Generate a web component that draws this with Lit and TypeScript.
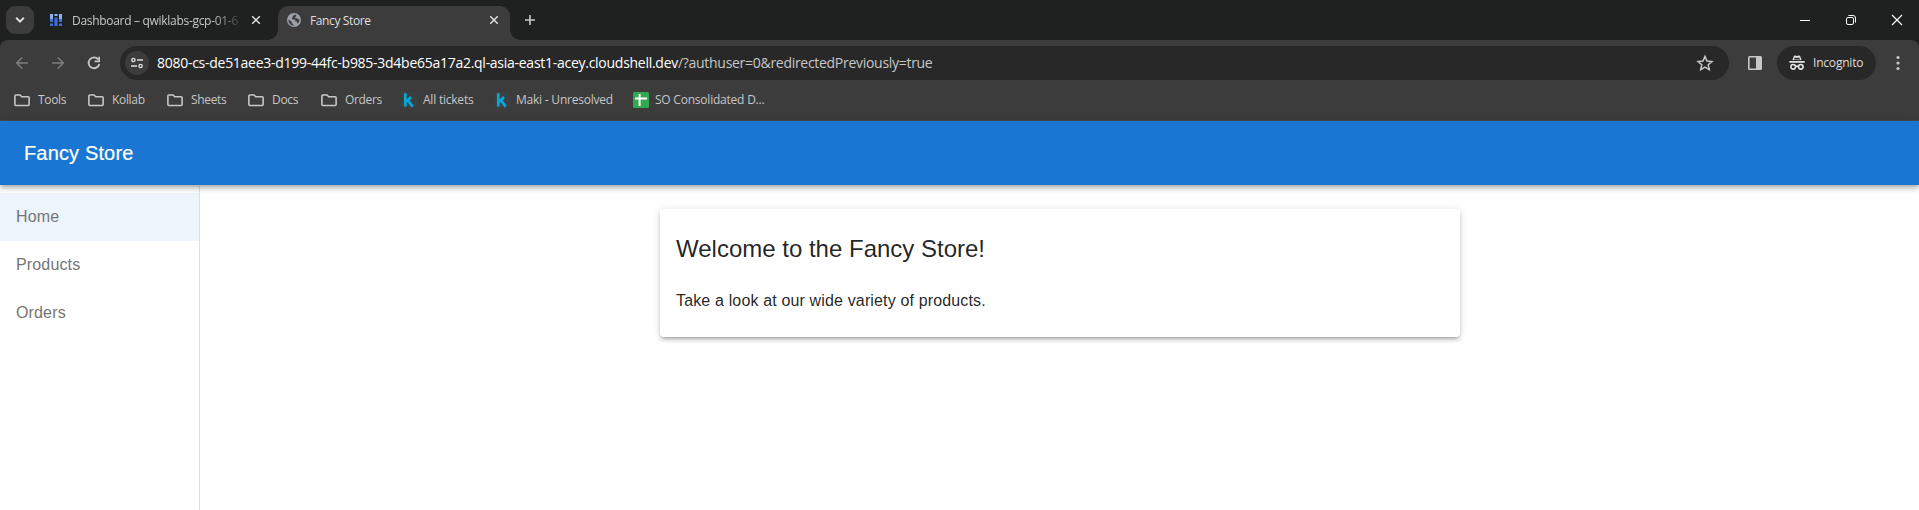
import { LitElement, html, css, svg } from "lit";
import { customElement, state } from "lit/decorators.js";
import { classMap } from "lit/directives/class-map.js";
import { styleMap } from "lit/directives/style-map.js";

interface Bookmark { kind: "folder" | "k" | "sheet"; label: string; width: number; }

const BOOKMARKS: Bookmark[] = [
  { kind: "folder", label: "Tools", width: 74 },
  { kind: "folder", label: "Kollab", width: 79 },
  { kind: "folder", label: "Sheets", width: 81 },
  { kind: "folder", label: "Docs", width: 73 },
  { kind: "folder", label: "Orders", width: 80 },
  { kind: "k", label: "All tickets", width: 93 },
  { kind: "k", label: "Maki - Unresolved", width: 139 },
  { kind: "sheet", label: "SO Consolidated D...", width: 140 },
];

const closeIcon = html`<svg class="x" width="10" height="10" viewBox="0 0 10 10"><path d="M1.2 1.2l7.6 7.6M8.8 1.2L1.2 8.8" /></svg>`;

const bookmarkIcon = {
  folder: svg`<path d="M1.8 3h4.3l1.6 1.7h6.5q.9 0 .9.9v7q0 .9-.9.9H1.8q-.9 0-.9-.9V3.9Q.9 3 1.8 3z" fill="none" stroke="#c7c7c7" stroke-width="1.6"/>`,
  k: svg`<rect x="1" width="15" height="16" fill="#3b4143"/><path d="M4.3 1.2v13.4M4.8 10.4l5.2-5.4M7.2 8.5l4.4 6.1" fill="none" stroke="#05a8d8" stroke-width="2.7"/>`,
  sheet: svg`<rect width="16" height="16" rx="1.5" fill="#34a853"/><path d="M2 6.6h12M6.6 2v12" stroke="#fff" stroke-width="2"/>`,
};

@customElement("browser-chrome")
class BrowserChrome extends LitElement {
  static styles = css`
    :host { display: block; height: 121px; background: #1f2120; font: 12px/16px "Open Sans", "Noto Sans", sans-serif; color: #dfdfdf; }
    svg { display: block; flex: none; }
    .strip { display: flex; height: 40px; box-sizing: border-box; padding-left: 6px; align-items: center; }
    .search { width: 28px; height: 28px; border-radius: 9px; background: #3c3c3c; display: grid; place-items: center; margin-right: 16px; }
    .x { fill: none; stroke: #dedede; stroke-width: 1.5; }
    .idle { display: flex; align-items: center; width: 218px; }
    .idle .name { margin-left: 10px; width: 167px; overflow: hidden; white-space: nowrap; letter-spacing: -.3px; color: #c8c8c8; mask-image: linear-gradient(90deg, #000 140px, transparent 172px); }
    .name { padding-top: 2px; }
    .idle .x { margin-left: 12px; }
    .flare { width: 10px; height: 10px; align-self: flex-end; }
    .flare.left { background: radial-gradient(circle at 0 0, transparent 9.5px, #3c3c3c 10px); }
    .flare.right { background: radial-gradient(circle at 100% 0, transparent 9.5px, #3c3c3c 10px); }
    .tab { display: flex; align-items: center; align-self: flex-end; width: 232px; height: 34px; box-sizing: border-box; padding: 0 11px 6px 9px; background: #3c3c3c; border-radius: 10px 10px 0 0; }
    .tab .name { margin-left: 9px; flex: 1; letter-spacing: -.38px; }
    .plus { margin-left: 5px; }
    .window { margin-left: auto; margin-right: 16px; display: flex; gap: 34px; fill: none; stroke: #fff; }
    .panel { height: 81px; background: #3c3c3c; border-radius: 8px 8px 0 0; box-sizing: border-box; padding-top: 6px; border-bottom: 1px solid #4b4a48; }
    .toolbar { display: flex; align-items: center; height: 34px; padding-left: 14px; }
    .nav { display: flex; gap: 20px; width: 106px; }
    .omni { display: flex; align-items: center; width: 1609px; height: 34px; border-radius: 17px; background: #282828; box-sizing: border-box; padding: 0 15px 0 5px; }
    .chip { width: 24px; height: 24px; border-radius: 50%; background: #3c3c3c; display: grid; place-items: center; }
    .url { margin-left: 8px; flex: 1; font-size: 14px; line-height: 20px; letter-spacing: -.29px; color: #c7c7c7; white-space: nowrap; }
    .host { color: #fff; letter-spacing: -.27px; }
    .side { margin-left: 18px; }
    .incog { margin-left: 14px; width: 99px; height: 34px; border-radius: 17px; background: #282828; display: flex; align-items: center; box-sizing: border-box; padding-left: 12px; gap: 8px; letter-spacing: -.2px; }
    .dots { margin-left: 20px; }
    .bookmarks { display: flex; height: 40px; align-items: center; padding-left: 14px; color: #c7c7c7; }
    .bm { display: flex; align-items: center; gap: 8px; flex: none; white-space: nowrap; letter-spacing: -.33px; }
    .bm.k { gap: 6px; letter-spacing: -.22px; }
    .bm.sheet { gap: 6px; letter-spacing: -.22px; }
  `;

  render() {
    return html`
      <div class="strip">
        <div class="search"><svg width="10" height="8" viewBox="0 0 10 8"><path d="M1.2 1.8L5 5.6l3.8-3.8" fill="none" stroke="#dedede" stroke-width="2"/></svg></div>
        <div class="idle">
          <svg width="12" height="12" viewBox="0 0 12 12"><path d="M0 0h3v7H0zM4.5 0h3v2h-3zM9 0h3v7H9z" fill="#8ab0f5"/><path d="M4.5 3.5h3V12h-3zM0 5h3v3H0zM9 5h3v3H9zM0 9.5h3V12H0zM9 9.5h3V12H9z" fill="#3c6fe0"/></svg>
          <span class="name">Dashboard – qwiklabs-gcp-01-6</span>${closeIcon}
        </div>
        <div class="flare left"></div>
        <div class="tab">
          <svg width="14" height="14" viewBox="0 0 14 14"><circle cx="7" cy="7" r="7" fill="#9aa0a6"/><path d="M8.2 1.6L5.8 3v1.3L4.5 5.6l1.3 1h2.4v1.8l1.6.2.8 2.1 1.4-1.6.5-2.6-1.5-.2-.7-1.1H8.2V4.1l1.3-1zM1.3 6.5l3.2 2v1.4l1.9 1.4v1.4L4 12l-2.3-2.7z" fill="#3c3c3c"/></svg>
          <span class="name">Fancy Store</span>${closeIcon}
        </div>
        <div class="flare right"></div>
        <svg class="plus" width="10" height="10" viewBox="0 0 10 10"><path d="M5 0v10M0 5h10" stroke="#c7c7c7" stroke-width="1.6"/></svg>
        <div class="window">
          <svg width="12" height="12" viewBox="0 0 12 12"><path d="M1 6.5h10"/></svg>
          <svg width="12" height="12" viewBox="0 0 12 12"><rect x="1.5" y="3.5" width="7" height="7" rx="1.5"/><path d="M3.5 1.5H8Q10.5 1.5 10.5 4v4.5"/></svg>
          <svg width="12" height="12" viewBox="0 0 12 12"><path d="M1 1l10 10M11 1L1 11" stroke-width="1.1"/></svg>
        </div>
      </div>
      <div class="panel">
        <div class="toolbar">
          <div class="nav">
            <svg width="16" height="16" viewBox="0 0 16 16"><path d="M14 8H3M8.2 2.5L2.7 8l5.5 5.5" fill="none" stroke="#7d7d7d" stroke-width="1.6"/></svg>
            <svg width="16" height="16" viewBox="0 0 16 16"><path d="M2 8h11M7.8 2.5L13.3 8l-5.5 5.5" fill="none" stroke="#7d7d7d" stroke-width="1.6"/></svg>
            <svg width="16" height="16" viewBox="0 0 16 16"><path d="M12.2 4.4A5.4 5.4 0 1 0 13.3 9" fill="none" stroke="#c7c7c7" stroke-width="1.8"/><path d="M14 1.8v5.4H8.6V5.5h3.7V1.8z" fill="#c7c7c7"/></svg>
          </div>
          <div class="omni">
            <div class="chip"><svg width="12" height="12" viewBox="0 0 12 12" fill="none" stroke="#dedede" stroke-width="1.4"><circle cx="2.4" cy="3" r="1.6"/><path d="M6 3h6M0 9h6"/><circle cx="9.6" cy="9" r="1.6"/></svg></div>
            <span class="url"><span class="host">8080-cs-de51aee3-d199-44fc-b985-3d4be65a17a2.ql-asia-east1-acey.cloudshell.dev</span>/?authuser=0&amp;redirectedPreviously=true</span>
            <svg width="18" height="18" viewBox="0 0 18 18"><path d="M9 2.4l2 4.6 5 .5-3.8 3.3 1.1 4.9L9 13.1l-4.3 2.6 1.1-4.9L2 7.5 7 7z" fill="none" stroke="#c7c7c7" stroke-width="1.5"/></svg>
          </div>
          <svg class="side" width="16" height="16" viewBox="0 0 16 16"><rect x="1.8" y="1.8" width="12.4" height="12.4" rx=".8" fill="none" stroke="#c7c7c7" stroke-width="1.6"/><path d="M9 1.8h5.2v12.4H9z" fill="#c7c7c7"/></svg>
          <div class="incog">
            <svg width="16" height="16" viewBox="0 0 16 16"><path d="M.3 6.1h15.4v1.6H.3zM3.4 4.9L4.9.9q.3-.7 1-.4L8 1.1l2.1-.6q.7-.3 1 .4l1.5 4z" fill="#e3e3e3"/><path d="M5.8 2.4l-.8 2h6l-.8-2-2.2.6z" fill="#282828"/><g fill="none" stroke="#e3e3e3" stroke-width="1.6"><circle cx="4.2" cy="11.8" r="2.3"/><circle cx="11.8" cy="11.8" r="2.3"/><path d="M6.4 11.6q1.6-.9 3.2 0"/></g></svg>
            <span>Incognito</span>
          </div>
          <svg class="dots" width="4" height="16" viewBox="0 0 4 16" fill="#c7c7c7"><circle cx="2" cy="2.5" r="1.6"/><circle cx="2" cy="8" r="1.6"/><circle cx="2" cy="13.5" r="1.6"/></svg>
        </div>
        <div class="bookmarks">
          ${BOOKMARKS.map((b) => html`<div class="bm ${b.kind}" style=${styleMap({ width: `${b.width}px` })}><svg width="16" height="16" viewBox="0 0 16 16">${bookmarkIcon[b.kind]}</svg><span>${b.label}</span></div>`)}
        </div>
      </div>`;
  }
}

@customElement("app-root")
class AppRoot extends LitElement {
  static styles = css`
    :host { display: flex; flex-direction: column; height: 510px; overflow: hidden; background: #fff; font-family: "Liberation Sans", Arial, sans-serif; color: rgba(0, 0, 0, .87); }
    header { flex: none; height: 64px; box-sizing: border-box; display: flex; align-items: center; padding: 0 24px; background: #1976d2; color: #fff; font-size: 20px; letter-spacing: .15px; -webkit-text-stroke: .2px #fff; position: relative; z-index: 1; box-shadow: 0 2px 4px -1px rgba(0,0,0,.2), 0 4px 5px rgba(0,0,0,.14), 0 1px 10px rgba(0,0,0,.12); }
    .body { flex: 1; display: flex; min-height: 0; }
    nav { width: 200px; box-sizing: border-box; border-right: 1px solid #e0e0e0; padding-top: 8px; }
    .item { height: 48px; display: flex; align-items: center; padding-left: 16px; color: #757575; font-size: 16px; letter-spacing: .15px; cursor: pointer; }
    .item.selected { background: #edf4fc; }
    main { flex: 1; display: flex; justify-content: center; align-items: flex-start; padding-top: 24px; }
    .card { width: 800px; height: 128px; box-sizing: border-box; border-radius: 4px; background: #fff; padding: 24px 16px 0 16.5px; box-shadow: 0 3px 3px -2px rgba(0,0,0,.2), 0 3px 4px rgba(0,0,0,.14), 0 1px 8px rgba(0,0,0,.12); }
    h1 { margin: 0 0 20px; font-size: 24px; line-height: 32px; font-weight: 400; }
    p { margin: 0; font-size: 16px; line-height: 32px; letter-spacing: .15px; }
  `;

  @state() private selected = "Home";

  render() {
    return html`
      <browser-chrome></browser-chrome>
      <header>Fancy Store</header>
      <div class="body">
        <nav>${["Home", "Products", "Orders"].map((name) => html`<div class=${classMap({ item: true, selected: name === this.selected })} @click=${() => (this.selected = name)}>${name}</div>`)}</nav>
        <main><section class="card"><h1>Welcome to the Fancy Store!</h1><p>Take a look at our wide variety of products.</p></section></main>
      </div>`;
  }
}
